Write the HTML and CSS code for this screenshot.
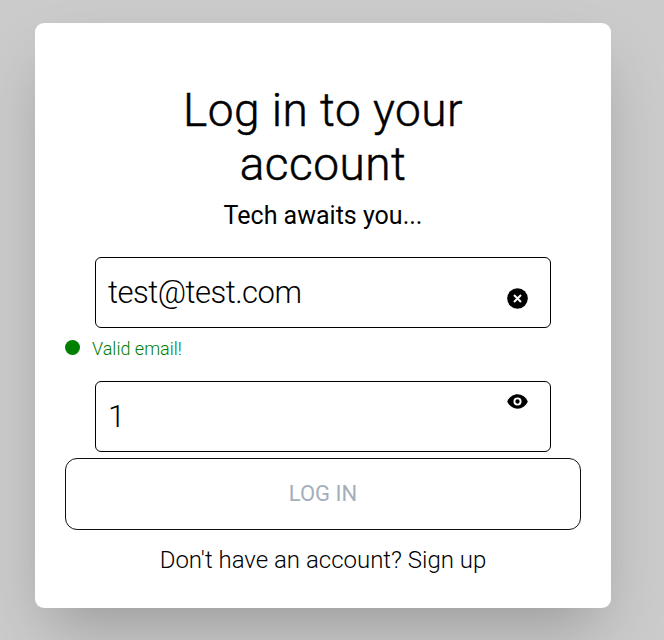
FILE: index.html
```html
<!DOCTYPE html>
<html lang="en">
<head>
<meta charset="utf-8">
<title>Log in</title>
<link rel="stylesheet" href="styles.css">
</head>
<body>
<main class="card">
  <h1 class="title">Log in to your account</h1>
  <p class="subtitle">Tech awaits you...</p>
  <form class="form">
    <div class="field">
      <span class="value value-email">test@test.com</span>
      <svg class="icon icon-clear" viewBox="-0.5 -0.5 24 24"><circle cx="12" cy="12" r="10.300"/><path class="cross" d="M8.500 8.500l7 7M15.500 8.500l-7 7"/></svg>
    </div>
    <div class="hint"><span class="dot"></span><span class="hint-text">Valid email!</span></div>
    <div class="field">
      <span class="value">1</span>
      <svg class="icon icon-eye" viewBox="-0.5 -0.5 24 24"><path d="M12 4.800C7.600 4.800 3.500 7.800 1.700 12c1.800 4.200 5.900 7.200 10.300 7.200s8.500-3 10.300-7.200C20.500 7.800 16.400 4.800 12 4.800z"/><circle class="iris" cx="12" cy="12" r="3.100"/></svg>
    </div>
    <button class="submit" type="button">LOG IN</button>
  </form>
  <p class="signup">Don't have an account? Sign up</p>
</main>
</body>
</html>
```

FILE: styles.css
```css
* { box-sizing: border-box; }
body {
  margin: 0;
  height: 640px;
  overflow: hidden;
  padding: 23px 53px 32px 35px;
  background: #cbcbcb;
  font-family: Roboto, sans-serif;
  font-weight: 300;
  color: #000;
}
.card {
  height: 585px;
  padding: 60px 30px 0;
  background: #fff;
  border-radius: 9px;
  box-shadow: 0 30px 60px -14px rgba(0, 0, 0, .25);
}
.title {
  margin: 0 auto;
  width: 340px;
  font-size: 46px;
  line-height: 54px;
  font-weight: 300;
  letter-spacing: .5px;
  -webkit-text-stroke: .5px #000;
  text-align: center;
}
.subtitle {
  margin: 11px 0 0;
  font-size: 25px;
  line-height: 28px;
  font-weight: 400;
  text-align: center;
}
.form { margin-top: 27px; }
.field {
  display: flex;
  justify-content: space-between;
  height: 71px;
  margin: 0 30px;
  padding: 0 21px 0 12px;
  border: 1px solid #000;
  border-radius: 6px;
}
.value { font-size: 31px; line-height: 70px; }
.value-email { letter-spacing: -.5px; }
.icon { width: 24px; height: 24px; }
.icon-clear { margin-top: 28px; }
.icon-eye { margin-top: 7px; }
.cross { fill: none; stroke: #fff; stroke-width: 2; }
.iris { fill: none; stroke: #fff; stroke-width: 1.9; }
.hint {
  display: flex;
  align-items: center;
  gap: 12px;
  height: 21px;
  margin: 9px 0 23px;
  color: #008000;
  font-size: 18px;
}
.hint-text { padding-top: 2px; }
.dot { width: 15px; height: 15px; border-radius: 50%; background: #008000; }
.submit {
  display: block;
  width: 100%;
  height: 72px;
  margin-top: 6px;
  padding: 0 0 1px;
  border: 1px solid #101014;
  border-radius: 12px;
  background: #fff;
  color: #a4afbc;
  font: 400 22px Roboto, sans-serif;
}
.signup {
  margin: 16px 0 0;
  font-size: 24px;
  line-height: 28px;
  text-align: center;
}
```
